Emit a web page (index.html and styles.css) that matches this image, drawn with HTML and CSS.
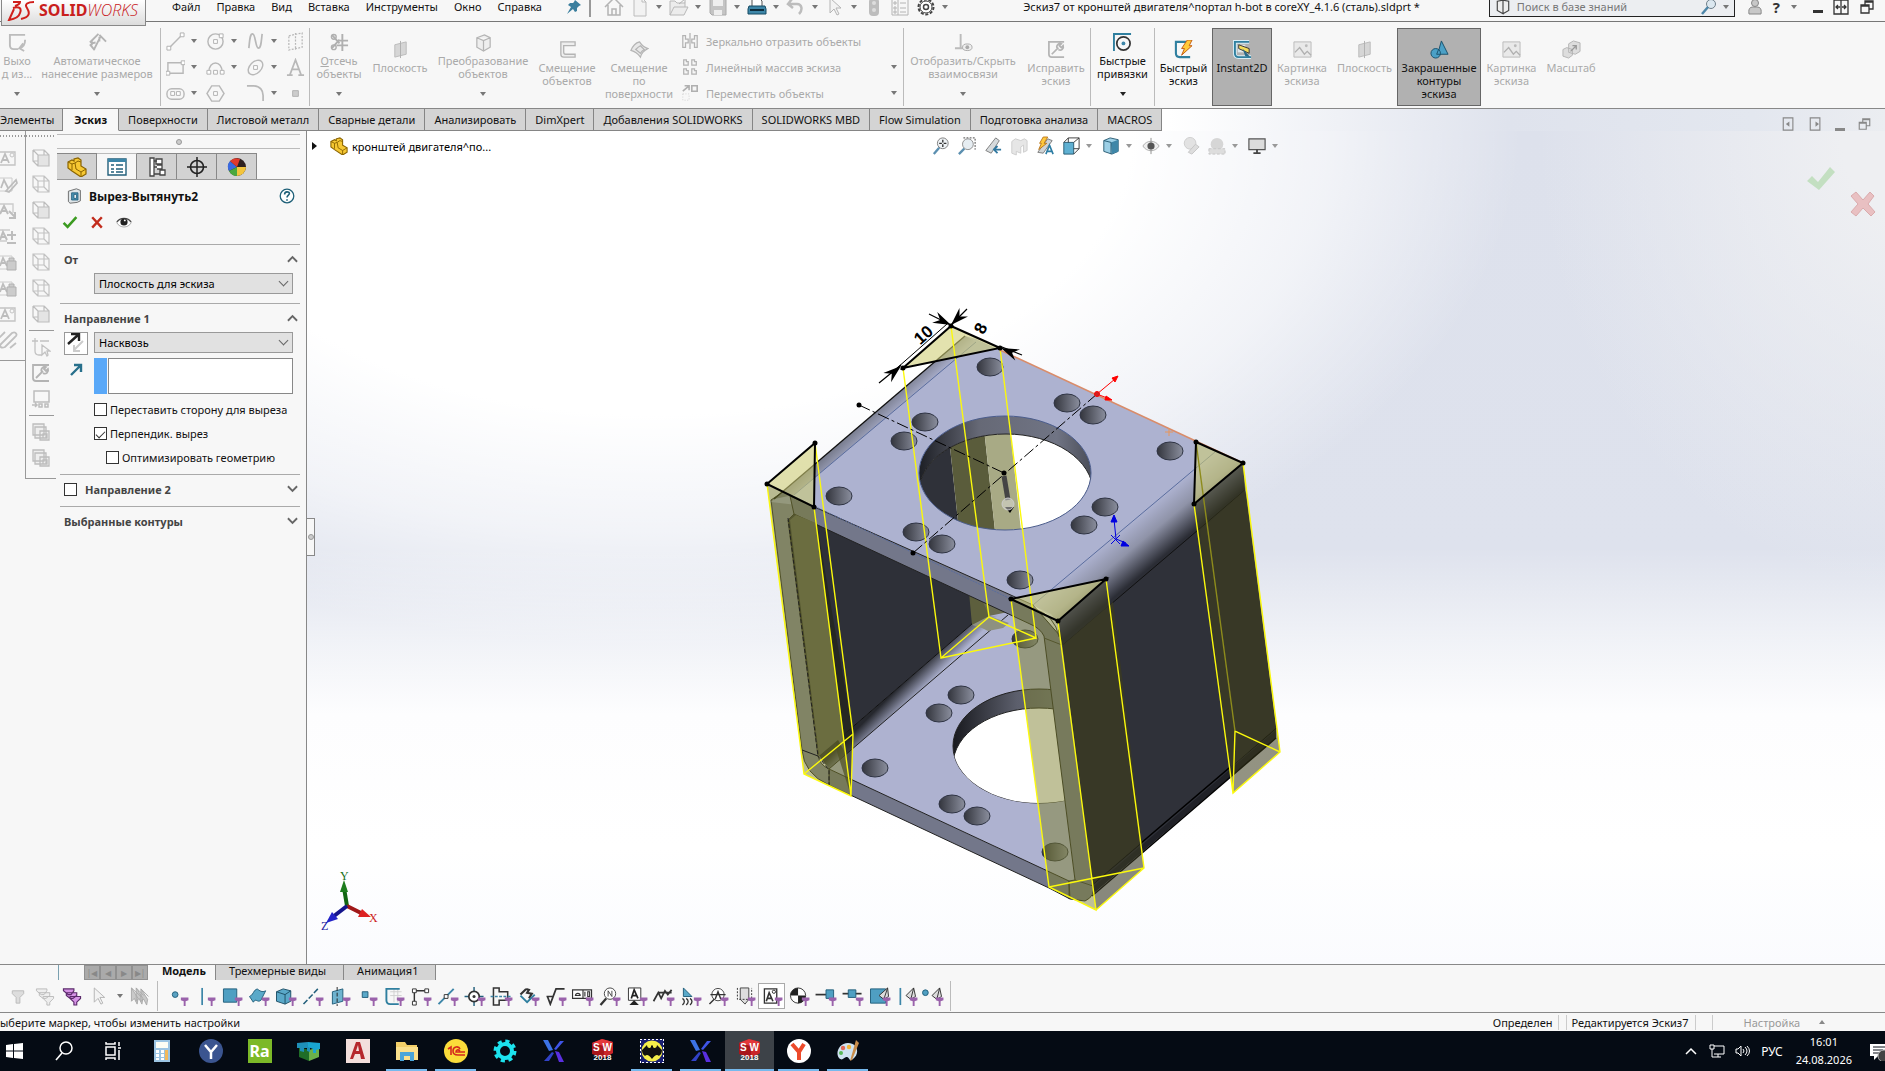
FILE: index.html
```html
<!DOCTYPE html>
<html lang="ru">
<head>
  <title>SOLIDWORKS</title>
  <meta charset="UTF-8">
  <link rel="stylesheet" href="styles.css">
</head>
<body>

<!-- Набор значков -->
<svg class="sprite" aria-hidden="true">
  <symbol id="pin" viewBox="0 0 14 14"><path d="M8 0l6 5-2 1-2 2 0 3-2 1-2-3-6 5 4-7-3-2 2-2 3 0 1-1z" fill="#3b7f9e"/></symbol>
  <symbol id="home" viewBox="0 0 20 20"><path d="M1 10L10 1l9 9M4 8v10h12V8M8 18v-6h4v6" fill="none" stroke="#b4b4b4" stroke-width="1.5"/></symbol>
  <symbol id="page" viewBox="0 0 20 20"><path d="M4 1h8l4 4v14H4zM12 1v4h4" fill="#f2f2f2" stroke="#bcbcbc"/></symbol>
  <symbol id="folder" viewBox="0 0 20 20"><path d="M1 18V4h5l2 2h8v4M1 18l4-8h14l-4 8z" fill="#ececec" stroke="#b8b8b8"/><path d="M10 7l6-5m-4 0h4v4" fill="none" stroke="#b0b0b0"/></symbol>
  <symbol id="save" viewBox="0 0 20 20"><path d="M2 2h16v16H4l-2-2z" fill="#c4c4c4" stroke="#aaa"/><path d="M5 2h10v7H5zM6 13h8v5H6z" fill="#eee"/></symbol>
  <symbol id="print" viewBox="0 0 20 20"><path d="M5 9V2h8l2 2v5" fill="#fff" stroke="#555"/><path d="M2 9h16l1 3v5H1v-5z" fill="#3d86a8" stroke="#174a63"/><path d="M3 13h14" stroke="#0d2d3d" stroke-width="2"/></symbol>
  <symbol id="undo" viewBox="0 0 20 20"><path d="M6 2L2 7l5 4M3 7h8c5 0 6 6 2 10" fill="none" stroke="#bdbdbd" stroke-width="2.5"/></symbol>
  <symbol id="cursor" viewBox="0 0 20 20"><path d="M5 1v15l4-4 3 6 2-1-3-6h5z" fill="#f3f3f3" stroke="#b4b4b4"/></symbol>
  <symbol id="light" viewBox="0 0 20 20"><rect x="5" y="1" width="10" height="18" rx="4" fill="#bdbdbd"/><circle cx="10" cy="6" r="2" fill="#ddd"/><circle cx="10" cy="13" r="2" fill="#ddd"/></symbol>
  <symbol id="list" viewBox="0 0 20 20"><path d="M2 2h16v16H2zM8 2v16M4 5h2v2H4zM4 10h2v2H4zM4 14h2v2H4zM10 6h6M10 11h6M10 15h6" fill="none" stroke="#b4b4b4"/></symbol>
  <symbol id="gear" viewBox="0 0 20 20"><circle cx="10" cy="10" r="7.5" fill="none" stroke="#444" stroke-width="2" stroke-dasharray="3 1.7"/><circle cx="10" cy="10" r="6" fill="#fff" stroke="#444"/><circle cx="10" cy="10" r="2.5" fill="none" stroke="#444" stroke-width="1.5"/></symbol>
  <symbol id="book" viewBox="0 0 14 14"><path d="M2 2l5-1v12l-5-3zM7 1l5 1v8l-5 3" fill="#eee" stroke="#444"/></symbol>
  <symbol id="loupe" viewBox="0 0 16 16"><circle cx="10" cy="5" r="4.5" fill="#dbe7ef" stroke="#6f7f8a"/><path d="M7 8l-6 7" stroke="#4e86a8" stroke-width="2.5"/></symbol>
  <symbol id="person" viewBox="0 0 16 16"><circle cx="8" cy="4" r="3.5" fill="#c8c8c8" stroke="#888"/><path d="M2 15c-1-7 2-7 6-7s7 0 6 7z" fill="#c8c8c8" stroke="#888"/></symbol>
  <symbol id="expand" viewBox="0 0 16 16"><path d="M1 1h14v14H1zM8 1v14M3 8h4M9 8h4M5 6L3 8l2 2M11 6l2 2-2 2" fill="none" stroke="#333" stroke-width="1.3"/></symbol>
  <symbol id="restore" viewBox="0 0 16 16"><path d="M2 6h8v8H2zM6 6V2h8v8h-4M2 7h8M6 3h8" fill="none" stroke="currentColor" stroke-width="1.3"/></symbol>
  <symbol id="pane-left" viewBox="0 0 16 16"><path d="M2 1h11v14H2z" fill="none" stroke="currentColor" stroke-width="1.3"/><path d="M9 5v6L5 8z" fill="currentColor"/></symbol>
  <symbol id="pane-right" viewBox="0 0 16 16"><path d="M2 1h11v14H2z" fill="none" stroke="currentColor" stroke-width="1.3"/><path d="M8 5v6l4-3z" fill="currentColor"/></symbol>

  <symbol id="exit" viewBox="0 0 20 20"><path d="M18 2H2v11c0 3 1 4 4 4h5M18 7c0 5-2 8-6 9m4-5l-4 5 5 3" fill="none" stroke="#bcbcbc" stroke-width="2"/></symbol>
  <symbol id="dims" viewBox="0 0 20 20"><path d="M2 10L11 1M7 18l-5-6M19 9l-7-7M3 11l5-1M4 8l0 5M13 4L6 18m6-14l0 5" fill="none" stroke="#b4b4b4" stroke-width="2"/></symbol>
  <symbol id="line" viewBox="0 0 20 20"><path d="M3 17L17 3" stroke="#b8b8b8" stroke-width="1.5"/><path d="M1 15h4v4H1zM15 1h4v4h-4z" fill="#fff" stroke="#b0b0b0"/></symbol>
  <symbol id="rect" viewBox="0 0 20 20"><path d="M2 5h16v11H2z" fill="none" stroke="#b8b8b8" stroke-width="1.5"/><path d="M0 14h4v4H0zM16 3h4v4h-4z" fill="#fff" stroke="#b0b0b0"/></symbol>
  <symbol id="slot" viewBox="0 0 20 20"><rect x="1" y="5" width="18" height="11" rx="5" fill="none" stroke="#b8b8b8" stroke-width="1.5"/><path d="M5 8h4v4H5zM11 8h4v4h-4z" fill="#fff" stroke="#b0b0b0"/></symbol>
  <symbol id="circle" viewBox="0 0 20 20"><circle cx="10" cy="10" r="8" fill="none" stroke="#b8b8b8" stroke-width="1.5"/><path d="M8 8h4v4H8zM14 2h4v4h-4z" fill="#fff" stroke="#b0b0b0"/></symbol>
  <symbol id="arc" viewBox="0 0 20 20"><path d="M3 15C3 2 17 2 17 15" fill="none" stroke="#b8b8b8" stroke-width="1.5"/><path d="M1 13h4v4H1zM15 13h4v4h-4zM8 13h4v4H8z" fill="#fff" stroke="#b0b0b0"/></symbol>
  <symbol id="hexagon" viewBox="0 0 20 20"><path d="M6 2h8l5 8-5 8H6l-5-8z" fill="none" stroke="#b8b8b8" stroke-width="1.5"/><path d="M8 8h4v4H8z" fill="#fff" stroke="#b0b0b0"/></symbol>
  <symbol id="spline" viewBox="0 0 20 20"><path d="M3 17C4 8 4 2 7 2s3 15 6 15 3-7 4-15" fill="none" stroke="#b8b8b8" stroke-width="1.8"/></symbol>
  <symbol id="ellipse" viewBox="0 0 20 20"><ellipse cx="10" cy="10" rx="9" ry="6" transform="rotate(-45 10 10)" fill="none" stroke="#b8b8b8" stroke-width="1.5"/><path d="M8 8h4v4H8z" fill="#fff" stroke="#b0b0b0"/></symbol>
  <symbol id="fillet" viewBox="0 0 20 20"><path d="M1 2h7c7 0 10 5 10 10v6" fill="none" stroke="#b8b8b8" stroke-width="1.8"/></symbol>
  <symbol id="plane-dash" viewBox="0 0 20 20"><path d="M3 4l14-3v15L3 19zM10 1v18" fill="none" stroke="#b8b8b8" stroke-width="1.3" stroke-dasharray="2 1.5"/></symbol>
  <symbol id="text" viewBox="0 0 20 20"><path d="M1 18h6M13 18h6M4 18L10 2l6 16M6 12h8" fill="none" stroke="#b8b8b8" stroke-width="1.8"/></symbol>
  <symbol id="point" viewBox="0 0 20 20"><path d="M7 7h6v6H7z" fill="#ccc" stroke="#b0b0b0"/></symbol>
  <symbol id="trim" viewBox="0 0 20 20"><path d="M13 1v18M7 13h12M9 8h10M2 2l8 9M2 16l8-9" fill="none" stroke="#b0b0b0" stroke-width="2"/><circle cx="4" cy="4" r="2.5" fill="none" stroke="#b0b0b0" stroke-width="1.5"/><circle cx="4" cy="15" r="2.5" fill="none" stroke="#b0b0b0" stroke-width="1.5"/></symbol>
  <symbol id="plane" viewBox="0 0 20 20"><path d="M4 5l12-3v13L4 18z" fill="#d6d6d6" stroke="#bbb"/><path d="M10 1v18" stroke="#b0b0b0"/></symbol>
  <symbol id="cube" viewBox="0 0 20 20"><path d="M3 5l8-3 6 3v10l-7 4-7-4zM3 5l7 3 7-3M10 8v11" fill="#eee" stroke="#b4b4b4" stroke-width="1.3"/></symbol>
  <symbol id="offset" viewBox="0 0 20 20"><path d="M18 2H3v13c0 2 1 3 3 3h12v-3H8c-2 0-2-1-2-2V6h12z" fill="#eee" stroke="#b4b4b4" stroke-width="1.4"/></symbol>
  <symbol id="surf" viewBox="0 0 20 20"><path d="M1 11c2-5 5-8 9-9 2 3 5 6 9 7-4 2-7 5-8 9-3-4-6-6-10-7zM6 10c2-2 3-3 5-4l4 4c-2 1-3 2-4 4z" fill="#e8e8e8" stroke="#b4b4b4" stroke-width="1.3"/></symbol>
  <symbol id="mirror" viewBox="0 0 20 20"><path d="M10 1v18M2 4h3v4h3v4H5v5H2zM18 4h-3v4h-3v4h3v5h3z" fill="none" stroke="#b4b4b4" stroke-width="1.4"/></symbol>
  <symbol id="pattern" viewBox="0 0 20 20"><path d="M3 2h3v2h2v4H3zM12 2h3v2h2v4h-5zM3 12h3v2h2v4H3zM12 12h3v2h2v4h-5z" fill="none" stroke="#b4b4b4" stroke-width="1.4"/></symbol>
  <symbol id="move" viewBox="0 0 20 20"><path d="M2 8l7-6M4 2h5v5M12 2h6v6h-6z" fill="none" stroke="#b0b0b0" stroke-width="1.8"/><path d="M2 11h7v7H2z" fill="none" stroke="#ccc" stroke-dasharray="1 2"/></symbol>
  <symbol id="relations" viewBox="0 0 20 20"><path d="M7 1v15M1 16h9" stroke="#bbb" stroke-width="2"/><ellipse cx="14" cy="15" rx="5" ry="3.5" fill="#eee" stroke="#aaa"/><circle cx="14" cy="15" r="2" fill="#aaa"/></symbol>
  <symbol id="repair" viewBox="0 0 20 20"><path d="M18 2H2v13c0 2 1 3 3 3h13M5 15l7-7M11 9c-2-3 1-6 4-5l-2 2 2 2 2-2c1 3-2 6-5 4" fill="none" stroke="#b4b4b4" stroke-width="1.8"/></symbol>
  <symbol id="snaps" viewBox="0 0 20 20"><path d="M1 19V1h18" fill="none" stroke="#2f7f9f" stroke-width="2"/><circle cx="11" cy="11" r="7" fill="none" stroke="#333" stroke-width="1.8"/><circle cx="11" cy="11" r="2" fill="#3d86a8"/></symbol>
  <symbol id="rapid" viewBox="0 0 20 20"><path d="M13 2H2v12c0 3 1 4 4 4h11" fill="none" stroke="#2f7f9f" stroke-width="2.2"/><path d="M14 0h5l-3 6h3L8 16l3-7H8z" fill="#ffca3a" stroke="#c25b12"/></symbol>
  <symbol id="instant" viewBox="0 0 20 20"><path d="M17 2H2v12c0 3 1 4 4 4h13" fill="none" stroke="#d8eef6" stroke-width="4"/><path d="M17 2H2v12c0 3 1 4 4 4h13" fill="none" stroke="#2f7f9f" stroke-width="2"/><path d="M5 5h8v8H5z" fill="#dfe8ec"/><path d="M6 5l11 4 0 5-11-5z" fill="#f4dc5a" stroke="#333"/><path d="M10 9l8 9-5-1" fill="#276b8a"/></symbol>
  <symbol id="picture" viewBox="0 0 20 20"><path d="M1 2h18v16H1z" fill="#e9e9e9" stroke="#bbb"/><path d="M2 13l5-5 5 7 3-3 4 4" fill="none" stroke="#b0b0b0" stroke-width="1.4"/><circle cx="14" cy="6" r="1.5" fill="#bbb"/></symbol>
  <symbol id="shaded" viewBox="0 0 20 20"><path d="M12 1l7 14H8z" fill="#4ba0c6" stroke="#19506c"/><circle cx="6" cy="14" r="5" fill="#4ba0c6" stroke="#19506c"/><path d="M9 10l-2 5h4" fill="none" stroke="#19506c"/></symbol>
  <symbol id="scale" viewBox="0 0 20 20"><path d="M7 4l5-3 7 2v9l-5 3-7-2zM1 10l4-2 6 2v6l-4 3-6-2z" fill="#ddd" stroke="#b4b4b4"/><path d="M9 12l6-6m-4 0h4v4" fill="none" stroke="#999" stroke-width="1.4"/></symbol>

  <symbol id="part" viewBox="0 0 20 20"><path d="M1 5l4-2 2 1 0-2 4-1 3 2v6l5 3v5l-5 3-9-6-4-3z" fill="#f6c833" stroke="#8a6400" stroke-width="1.2"/><path d="M1 5l4 2v6M5 7l3-1 1 6 5 3 5-3M8 6l3-2 3 1M14 15v5" fill="none" stroke="#8a6400"/></symbol>
  <symbol id="props" viewBox="0 0 20 20"><path d="M1 2h18v16H1z" fill="#fff" stroke="#225f7b" stroke-width="1.4"/><path d="M1 2h18v3H1z" fill="#3d86a8"/><path d="M4 8h3M4 12h3M4 15h3M9 8h7M9 12h7M9 15h7" stroke="#225f7b" stroke-width="1.6"/></symbol>
  <symbol id="config" viewBox="0 0 20 20"><path d="M3 1h4v18H3zM7 4h3M7 10h3M7 17h6M9 2h6v5H9zM10 8h5v4h-5M13 13h5v5h-5z" fill="#fff" stroke="#444" stroke-width="1.3"/></symbol>
  <symbol id="target" viewBox="0 0 20 20"><path d="M10 0v20M0 10h20" stroke="#222" stroke-width="1.5"/><circle cx="10" cy="10" r="6.5" fill="none" stroke="#222" stroke-width="1.6"/></symbol>
  <symbol id="ball" viewBox="0 0 20 20"><circle cx="10" cy="10" r="9" fill="#2e2020"/><path d="M10 10L3 4A9 9 0 0 0 2 14z" fill="#3a6ae0"/><path d="M10 10L13 2A9 9 0 0 0 3 4z" fill="#e03a2c"/><path d="M10 10L2 14a9 9 0 0 0 8 5z" fill="#4aa83d"/><path d="M10 10v9a9 9 0 0 0 9-9z" fill="#f3c43c"/></symbol>
  <symbol id="cut" viewBox="0 0 20 20"><path d="M3 4l10-3 5 2v13l-4 2-9 1-2-2z" fill="#dfe5e8" stroke="#555"/><path d="M7 6h8v9H7z" fill="#4b93b3" stroke="#1d5876"/><path d="M10 8h3v5h-3z" fill="#fff" stroke="#1d5876"/></symbol>
  <symbol id="help" viewBox="0 0 20 20"><circle cx="10" cy="10" r="8.5" fill="#fff" stroke="#1f6078" stroke-width="1.6"/><path d="M7 8c0-4 6-4 6-1 0 2-3 2-3 5M10 14v2" fill="none" stroke="#1f6078" stroke-width="2"/></symbol>
  <symbol id="tick" viewBox="0 0 20 20"><path d="M2 11l5 5L18 4" fill="none" stroke="#3c9b21" stroke-width="3.2"/></symbol>
  <symbol id="cross" viewBox="0 0 20 20"><path d="M4 4l12 13M16 4L4 17" stroke="#c22c1c" stroke-width="3"/></symbol>
  <symbol id="eye" viewBox="0 0 20 20"><path d="M1 11c4-7 14-7 18 0-4 7-14 7-18 0z" fill="#fff" stroke="#999"/><path d="M1 10c4-6 14-6 18 0" fill="none" stroke="#444" stroke-width="1.4"/><circle cx="10" cy="10" r="4.5" fill="#222"/><circle cx="11" cy="8" r="1.2" fill="#fff"/></symbol>
  <symbol id="chev-up" viewBox="0 0 12 8"><path d="M1 7l5-5 5 5" fill="none" stroke="#666" stroke-width="2"/></symbol>
  <symbol id="chev-down" viewBox="0 0 12 8"><path d="M1 1l5 5 5-5" fill="none" stroke="#666" stroke-width="2"/></symbol>
  <symbol id="reverse" viewBox="0 0 20 20"><path d="M2 11L12 2M5 1h8v7" fill="none" stroke="#222" stroke-width="2.4"/><path d="M17 8l-9 9m0-5v6h6" fill="none" stroke="#ccc" stroke-width="2"/></symbol>
  <symbol id="dir" viewBox="0 0 14 14"><path d="M2 12L11 3M5 2h7v7" fill="none" stroke="#28708c" stroke-width="2.4"/></symbol>

  <symbol id="anno" viewBox="0 0 20 20"><path d="M1 4h16v13H1" fill="none" stroke="#c4c4c4" stroke-width="1.4"/><path d="M3 15L7 6l4 9M5 12h5" fill="none" stroke="#bdbdbd" stroke-width="1.8"/><circle cx="14" cy="7" r="2" fill="none" stroke="#c4c4c4"/></symbol>
  <symbol id="anno-edit" viewBox="0 0 20 20"><path d="M1 4h13v13H1" fill="none" stroke="#ccc"/><path d="M3 14L6 6l4 8M8 17L18 6l1 3-8 9z" fill="none" stroke="#bdbdbd" stroke-width="1.8"/></symbol>
  <symbol id="anno-arrow" viewBox="0 0 20 20"><path d="M1 4h14v9" fill="none" stroke="#ccc" stroke-width="1.4"/><path d="M2 14L6 6l4 8M4 11h5M11 11l6 6m0-5v6h-6" fill="none" stroke="#bdbdbd" stroke-width="2"/></symbol>
  <symbol id="anno-plus" viewBox="0 0 20 20"><path d="M1 4h11M1 15h8" fill="none" stroke="#ccc" stroke-width="1.4"/><path d="M2 14L5 6l4 8M3 11h5M9 9h9M14 5v9M9 17h9" fill="none" stroke="#bdbdbd" stroke-width="2"/></symbol>
  <symbol id="anno-lock" viewBox="0 0 20 20"><path d="M1 4h13v13H1" fill="none" stroke="#ccc"/><path d="M2 14L5 6l4 8M3 11h5" fill="none" stroke="#bdbdbd" stroke-width="1.8"/><path d="M9 9h9v9H9zM11 9V6h5v3" fill="#ccc" stroke="#b0b0b0"/></symbol>
  <symbol id="links" viewBox="0 0 20 20"><path d="M3 14L14 3c4-2 6 2 3 4L7 17c-4 2-6-1-4-3zM1 8l6-6M12 18l6-5" fill="none" stroke="#c0c0c0" stroke-width="1.8"/></symbol>
  <symbol id="view" viewBox="0 0 20 20"><path d="M2 2h11v11H2zM7 7h11v11H7zM2 2l5 5M13 2l5 5M2 13l5 5M13 13l5 5" fill="none" stroke="#c2c2c2" stroke-width="1.2"/></symbol>
  <symbol id="view-face" viewBox="0 0 20 20"><path d="M7 7h11v11H7z" fill="#e4e4e4"/><path d="M2 2h11v5M2 2v11h5M7 7h11v11H7zM2 2l5 5M13 2l5 5M2 13l5 5" fill="none" stroke="#bdbdbd" stroke-width="1.2"/></symbol>
  <symbol id="sk-cursor" viewBox="0 0 20 20"><path d="M4 1v6M1 4h6M4 7v7c0 3 1 4 4 4h3M9 4h9M11 8v10l3-3 2 4 1-1-1-4h3z" fill="none" stroke="#c2c2c2" stroke-width="1.3"/></symbol>
  <symbol id="monitor" viewBox="0 0 20 20"><path d="M3 2h15v11H3zM1 16h5m-2-2l2 2-2 2M8 15h3v3H8zM14 15h3v3h-3z" fill="none" stroke="#bdbdbd" stroke-width="1.5"/></symbol>
  <symbol id="stack" viewBox="0 0 20 20"><path d="M2 2h11v11H2zM4 5h11v11H4zM9 9h9v9H9zM12 12h4v4h-4z" fill="#eee" stroke="#bdbdbd" stroke-width="1.3"/></symbol>

  <symbol id="zoom-fit" viewBox="0 0 20 20"><circle cx="12" cy="7" r="6" fill="#eef2f5" stroke="#777"/><path d="M12 3v8M8 7h8" stroke="#333" stroke-width="1.5" stroke-dasharray="3 2"/><path d="M8 12l-6 7" stroke="#5b8fb0" stroke-width="2.6"/></symbol>
  <symbol id="zoom-area" viewBox="0 0 20 20"><path d="M6 1h13v13" fill="none" stroke="#333" stroke-dasharray="2 1.5"/><circle cx="11" cy="8" r="6" fill="#e6edf2" stroke="#888"/><path d="M7 13l-6 6" stroke="#5b8fb0" stroke-width="2.6"/></symbol>
  <symbol id="zoom-prev" viewBox="0 0 20 20"><path d="M2 15L13 1l4 3L8 18z" fill="#d6dadc" stroke="#777"/><path d="M19 14h-8m4-4l-4 4 4 4" fill="none" stroke="#3178a0" stroke-width="2"/></symbol>
  <symbol id="section" viewBox="0 0 20 20"><path d="M2 5l4-3 6 2 4-2 3 2v11l-4 2v-8l-3 2v7l-5-2v4l-5-2z" fill="#e6e6e6" stroke="#ccc"/></symbol>
  <symbol id="anno-view" viewBox="0 0 20 20"><path d="M2 17L13 2l5 2L8 18z" fill="#d0d4d6" stroke="#777"/><path d="M8 0h5L9 7h3L3 14l3-7H4z" fill="#ffc93c" stroke="#b8741a"/><path d="M11 19l4-10 4 10M12 16h6" fill="none" stroke="#2c7da4" stroke-width="1.8"/></symbol>
  <symbol id="orient" viewBox="0 0 20 20"><path d="M2 6h11v13H2z" fill="#5fb0d2" stroke="#22566e"/><path d="M2 6l5-5h12v12l-6 6M13 6l6-5M7 1v5M13 13h6" fill="none" stroke="#333"/></symbol>
  <symbol id="style" viewBox="0 0 20 20"><path d="M2 4l7-3 9 2v13l-7 3-9-3z" fill="#9dd0e6" stroke="#22566e"/><path d="M10 6l8-3v13l-7 3z" fill="#3f87a8"/><path d="M2 4l8 2v13" fill="none" stroke="#22566e"/></symbol>
  <symbol id="eye-half" viewBox="0 0 20 20"><path d="M1 10c4-7 14-7 18 0-4 7-14 7-18 0z" fill="#eee" stroke="#aaa"/><path d="M10 1v18" stroke="#888"/><circle cx="10" cy="10" r="4" fill="#555"/></symbol>
  <symbol id="look" viewBox="0 0 20 20"><circle cx="9" cy="7" r="6.5" fill="#e2e2e2" stroke="#ccc"/><path d="M7 17l8-9 4 3-8 8z" fill="#ddd" stroke="#c4c4c4"/></symbol>
  <symbol id="scene" viewBox="0 0 20 20"><circle cx="10" cy="8" r="7" fill="#d6d6d6"/><path d="M1 13h18v6H1z" fill="#ddd" stroke="#c4c4c4" stroke-dasharray="3 2"/></symbol>
  <symbol id="screen" viewBox="0 0 20 20"><path d="M1 2h18v12H1z" fill="#dcdcdc" stroke="#555" stroke-width="1.3"/><path d="M10 14v4M6 18h8" stroke="#444" stroke-width="2"/></symbol>

  <symbol id="fn" viewBox="0 0 24 20"><path d="M15 11h8v3l-3 1v5h-2v-5l-3-1z" fill="#9a62ab"/></symbol>
  <symbol id="filter" viewBox="0 0 20 20"><path d="M4 4h12v3l-4 4v6H8v-6L4 7z" fill="#ddd" stroke="#bbb"/></symbol>
  <symbol id="filters" viewBox="0 0 20 20"><path d="M1 2h11v2l-3 4H6L1 4zM4 6h11v3l-4 3H8L4 9zM8 10h11v2l-4 4v3h-3v-3l-4-4z" fill="#eee" stroke="#bbb"/></symbol>
  <symbol id="filters-on" viewBox="0 0 20 20"><path d="M1 2h11v2l-3 4H6L1 4zM4 6h11v3l-4 3H8L4 9zM8 10h11v2l-4 4v3h-3v-3l-4-4z" fill="#d693e6" stroke="#5b2a6b" stroke-width="1.2"/></symbol>
  <symbol id="sel-stack" viewBox="0 0 20 20"><path d="M1 1v14l3-3 3 6 1-6zM6 1v14l3-3 3 6 1-6zM11 2v13l3-2 3 6 1-6z" fill="#c9c9c9" stroke="#aaa"/><path d="M1 1l10 9M6 1l8 8M11 2l8 8" stroke="#aaa"/></symbol>
  <symbol id="f-vertex" viewBox="0 0 24 20"><circle cx="9" cy="8" r="3" fill="#5aa2c2" stroke="#225f7b"/></symbol>
  <symbol id="f-edge" viewBox="0 0 24 20"><path d="M9 1v18" stroke="#3d86a8" stroke-width="1.8"/></symbol>
  <symbol id="f-face" viewBox="0 0 24 20"><path d="M3 2h14v14H3z" fill="#4f9fc2" stroke="#225f7b"/></symbol>
  <symbol id="f-surf" viewBox="0 0 24 20"><path d="M2 10c4-1 4-7 8-8 3 2 5 4 9 2l-5 10c-4 3-5-3-8 2z" fill="#5aa9c9" stroke="#225f7b"/></symbol>
  <symbol id="f-solid" viewBox="0 0 24 20"><path d="M2 5l7-3 8 2v11l-6 3-9-3z" fill="#5aa9c9" stroke="#1d4f66"/><path d="M2 5l9 3 6-4M11 8v10" fill="none" stroke="#1d4f66"/></symbol>
  <symbol id="f-axis" viewBox="0 0 24 20"><path d="M2 18L18 1" stroke="#225f7b" stroke-width="1.6" stroke-dasharray="6 2"/></symbol>
  <symbol id="f-plane" viewBox="0 0 24 20"><path d="M4 5l11-3v13L4 18z" fill="#6fb3cf" stroke="#225f7b"/><path d="M9 0v20" stroke="#222" stroke-dasharray="4 2"/></symbol>
  <symbol id="f-point" viewBox="0 0 24 20"><path d="M7 5h6v6H7z" fill="#5aa9c9" stroke="#225f7b"/></symbol>
  <symbol id="f-sketch" viewBox="0 0 24 20"><path d="M8 5h12M8 9h12M12 2v14M16 2v14" stroke="#d0d0d0"/><path d="M18 2H4v12c0 3 1 4 4 4h9" fill="none" stroke="#2f7f9f" stroke-width="2"/></symbol>
  <symbol id="f-seg" viewBox="0 0 24 20"><path d="M5 17V4h13" fill="none" stroke="#333" stroke-width="1.5"/><path d="M3 2h4v4H3zM16 2h4v4h-4zM3 15h4v4H3z" fill="#fff" stroke="#333"/></symbol>
  <symbol id="f-mid" viewBox="0 0 24 20"><path d="M2 18L18 2" stroke="#3d86a8" stroke-width="2"/><path d="M8 8h4v4H8z" fill="#fff" stroke="#333"/></symbol>
  <symbol id="f-center" viewBox="0 0 24 20"><path d="M11 0v20M1 10h20" stroke="#225f7b" stroke-width="1.5"/><circle cx="11" cy="10" r="5.5" fill="#fff" stroke="#333" stroke-width="1.8"/><circle cx="11" cy="10" r="1.6" fill="#333"/></symbol>
  <symbol id="f-cline" viewBox="0 0 24 20"><path d="M3 1h6v4h9v9H9v5H3z" fill="none" stroke="#333" stroke-width="1.6"/><path d="M0 10h22" stroke="#3d86a8" stroke-width="1.5" stroke-dasharray="3 1.5"/></symbol>
  <symbol id="f-dim" viewBox="0 0 24 20"><path d="M3 8l6-6M9 2l3 1-2 3 5 1-3 5" fill="none" stroke="#333" stroke-width="2.2"/><path d="M3 9l7 7 8-8" fill="none" stroke="#2f7f9f" stroke-width="2"/></symbol>
  <symbol id="f-rough" viewBox="0 0 24 20"><path d="M2 10h7M3 10l3 8L12 2h9" fill="none" stroke="#333" stroke-width="1.8"/></symbol>
  <symbol id="f-gtol" viewBox="0 0 24 20"><path d="M1 3h20v9H1zM12 3v9M4 9c0-3 5-3 5 0zM14 5v5M17 5h2v5h-2z" fill="#fff" stroke="#333" stroke-width="1.2"/></symbol>
  <symbol id="f-note" viewBox="0 0 24 20"><circle cx="12" cy="7" r="6" fill="#fff" stroke="#444"/><path d="M8 12l-6 7" stroke="#333" stroke-width="2.4"/><path d="M10 10V4l4 6V4" fill="none" stroke="#444"/></symbol>
  <symbol id="f-datum" viewBox="0 0 24 20"><path d="M3 1h13v13H3z" fill="#fff" stroke="#333"/><path d="M6 12l3-9 4 9M7 9h5" fill="none" stroke="#222" stroke-width="1.8"/><path d="M9 14l5 5H4z" fill="#222"/></symbol>
  <symbol id="f-weld" viewBox="0 0 24 20"><path d="M1 15l5-9 3 6 4-8 3 4 4-5M6 6h14" fill="none" stroke="#333" stroke-width="1.8"/></symbol>
  <symbol id="f-cat" viewBox="0 0 24 20"><path d="M4 1v9h9z" fill="#5aa9c9" stroke="#225f7b"/><path d="M3 12q4 3 0 7M7 12q4 3 0 7M11 12q4 3 0 7" fill="none" stroke="#333" stroke-width="1.4"/></symbol>
  <symbol id="f-detail" viewBox="0 0 24 20"><circle cx="12" cy="8" r="6.5" fill="#fff" stroke="#444"/><path d="M4 8h16M8 13l-5 5M9 13l3-8 3 8" fill="none" stroke="#333" stroke-width="1.5"/></symbol>
  <symbol id="f-thread" viewBox="0 0 24 20"><path d="M7 1h9v12l-4 5-5-5z" fill="#ddd" stroke="#444"/><path d="M4 1v12h15V1" fill="none" stroke="#333" stroke-dasharray="2 1.5"/></symbol>
  <symbol id="f-block" viewBox="0 0 24 20"><path d="M4 2h13v15H4z" fill="#fff" stroke="#333" stroke-width="1.4"/><path d="M6 15L9 6l4 9M7 12h5" fill="none" stroke="#333" stroke-width="1.7"/><circle cx="14" cy="5" r="1.7" fill="none" stroke="#333"/></symbol>
  <symbol id="f-mass" viewBox="0 0 24 20"><circle cx="11" cy="9" r="8" fill="#fff" stroke="#333"/><path d="M11 9V1a8 8 0 0 0-8 8zM11 9v8a8 8 0 0 0 8-8z" fill="#222"/></symbol>
  <symbol id="f-conn" viewBox="0 0 24 20"><path d="M1 8h12" stroke="#333" stroke-width="1.8"/><path d="M12 3h8v9h-8z" fill="#4f9fc2" stroke="#225f7b"/></symbol>
  <symbol id="f-route" viewBox="0 0 24 20"><path d="M1 7h20" stroke="#333" stroke-width="1.8"/><path d="M7 3h8v8H7z" fill="#4f9fc2" stroke="#225f7b"/></symbol>
  <symbol id="f-mface" viewBox="0 0 24 20"><path d="M2 2h16v15H2z" fill="#4f9fc2" stroke="#225f7b"/><path d="M20 1L11 9l5 4 5-3zM20 1l-4 12" fill="#ddd" stroke="#333"/></symbol>
  <symbol id="f-medge" viewBox="0 0 24 20"><path d="M5 1v18" stroke="#3d86a8" stroke-width="1.8"/><path d="M19 1l-8 8 5 4 5-3zM19 1l-3 12" fill="#ddd" stroke="#333"/></symbol>
  <symbol id="f-mpoint" viewBox="0 0 24 20"><circle cx="4" cy="6" r="3" fill="#4f9fc2" stroke="#225f7b"/><path d="M19 1l-8 8 5 4 5-3zM19 1l-3 12" fill="#ddd" stroke="#333"/></symbol>

  <symbol id="win" viewBox="0 0 24 24"><path d="M4 6l7-1v6.500H4zM12 5l9-1v7.500h-9zM4 12.500h7V19l-7-1zM12 12.500h9V20l-9-1z" fill="#fff"/></symbol>
  <symbol id="search" viewBox="0 0 24 24"><circle cx="14" cy="9" r="6" fill="none" stroke="#fff" stroke-width="1.500"/><path d="M10 14l-6 7" stroke="#fff" stroke-width="1.600"/></symbol>
  <symbol id="tasks" viewBox="0 0 24 24"><path d="M5 8h9v8H5zM5 3v2h9V3M5 21v-2h9v2M18 3v4M18 11v10M17 9h3" fill="none" stroke="#fff" stroke-width="1.500"/></symbol>
  <symbol id="calc" viewBox="0 0 24 24"><rect x="4" y="1" width="16" height="22" fill="#9cc4e2"/><path d="M6 3h12v6H6z" fill="#fdfdf4"/><path d="M6 11h3v3H6zM11 11h3v3h-3zM6 15h3v3H6zM11 15h3v3h-3zM6 19h3v2H6zM11 19h3v2h-3z" fill="#fff"/><path d="M15 11h3v10h-3z" fill="#f2b95c"/></symbol>
  <symbol id="y-blue" viewBox="0 0 24 24"><circle cx="12" cy="12" r="12" fill="#3b5590"/><path d="M6 6l6 7 6-7M12 13v7" fill="none" stroke="#fff" stroke-width="2.500"/></symbol>
  <symbol id="blocks" viewBox="0 0 24 24"><path d="M2 8l10 3v11L2 18z" fill="#1f6d28"/><path d="M12 11l10-3v10l-10 4z" fill="#6ab04a"/><path d="M0 4l11-1v4l2 1v5l-3-1v-3l-3 0v4l-4-1V9L0 9z" fill="#1e8fb8"/><path d="M11 3l12 1v6l-4 1v3l-3 0v-4l-5-2z" fill="#19a5d0"/></symbol>
  <symbol id="acad" viewBox="0 0 24 24"><path d="M0 0h24v24H0z" fill="#f3dfdc"/><path d="M4 20L10 3h4l5 17h-4l-1-5H9l-2 5z" fill="#b5262b"/><path d="M10 12l2-6 1 6z" fill="#f3dfdc"/></symbol>
  <symbol id="explorer" viewBox="0 0 24 24"><path d="M1 3h9l2 3h10v14H1z" fill="#f3cf68"/><path d="M1 8h22v13H1z" fill="#fbe08b"/><path d="M5 22v-9h14v9h-4v-5H9v5z" fill="#4aa5d8"/></symbol>
  <symbol id="onec" viewBox="0 0 24 24"><circle cx="12" cy="12" r="12" fill="#fbdc3a"/><path d="M4 10l3-2v8M16 10c-1-3-7-3-7 2 0 3 2 4 5 4h7M16 12c-2-2-4-1-4 1h9" fill="none" stroke="#d4281e" stroke-width="1.600"/></symbol>
  <symbol id="cog" viewBox="0 0 24 24"><circle cx="12" cy="12" r="9.500" fill="none" stroke="#1ce3ee" stroke-width="4" stroke-dasharray="4 3.460"/><circle cx="12" cy="12" r="7" fill="none" stroke="#1ce3ee" stroke-width="4"/></symbol>
  <symbol id="xlogo" viewBox="0 0 24 24"><path d="M1 1h5l5 10-4 1z" fill="#3c73e6"/><path d="M18 2h4l-8 9-2-1z" fill="#3f55e8"/><path d="M2 22l8-9 2 1-5 8z" fill="#3142c8"/><path d="M13 12l4 1 5 10h-5z" fill="#5a2fe0"/></symbol>
  <symbol id="swcube" viewBox="0 0 24 24"><path d="M1 4l10-4 11 3v11l-9 5-12-4z" fill="#a8161b"/><path d="M1 4l10-4 11 3-9 4z" fill="#e3383b"/><path d="M13 7l9-4v11l-9 5z" fill="#c9252a"/></symbol>
  <symbol id="bat" viewBox="0 0 24 24"><path d="M0 0h24v24H0z" fill="#1a2070" stroke="#fff" stroke-width="2" stroke-dasharray="2 2"/><circle cx="12" cy="12" r="10.500" fill="#f6ee4a"/><path d="M2 11l5-5c0 3 3 4 4 2l0-2 1 1 1-1v2c1 2 4 1 4-2l5 5c0 4-2 5-3 6-2-2-4-1-7 3-3-4-5-5-7-3-1-1-3-2-3-6z" fill="#111"/></symbol>
  <symbol id="y-red" viewBox="0 0 24 24"><circle cx="12" cy="12" r="12" fill="#fff"/><path d="M5 5l7 8v8M12 13l5-8" fill="none" stroke="#ec4a2b" stroke-width="4"/></symbol>
  <symbol id="paint" viewBox="0 0 24 24"><path d="M12 4C3 4-1 14 3 19c4 4 5-2 8-1s2 5 6 2c7-5 5-16-5-16z" fill="#cfe3f1"/><circle cx="7" cy="9" r="2.200" fill="#e06a5a"/><circle cx="5" cy="14" r="2" fill="#58b858"/><circle cx="13" cy="8" r="2.200" fill="#f0b63a"/><path d="M20 1l3 3-7 17-2 1z" fill="#c98d4a"/></symbol>
</svg>

<header class="titlebar">
  <div class="logo">
    <svg class="ds" viewBox="0 0 28 20"><path d="M6 1h7c0 2-2 3-5 4M6 7c6-2 9 0 7 5-1 4-5 6-11 7l5-11M27 1c-6 0-10 2-7 6 3 5 3 9-6 11" fill="none" stroke="#d0201c" stroke-width="2"/></svg>
    <span><b>SOLID</b><i>WORKS</i></span>
  </div>
  <nav class="menu">
    <a href="#">Файл</a>
    <a href="#">Правка</a>
    <a href="#">Вид</a>
    <a href="#">Вставка</a>
    <a href="#">Инструменты</a>
    <a href="#">Окно</a>
    <a href="#">Справка</a>
  </nav>
  <svg class="pin"><use href="#pin"/></svg>
  <div class="quick">
    <button class="no-arrow" aria-label="Домой"><svg><use href="#home"/></svg></button>
    <button aria-label="Создать"><svg><use href="#page"/></svg></button>
    <button aria-label="Открыть"><svg><use href="#folder"/></svg></button>
    <button aria-label="Сохранить"><svg><use href="#save"/></svg></button>
    <button class="on" aria-label="Печать"><svg><use href="#print"/></svg></button>
    <button aria-label="Отменить"><svg><use href="#undo"/></svg></button>
    <button aria-label="Выбрать"><svg><use href="#cursor"/></svg></button>
    <button class="no-arrow" aria-label="Перестроить"><svg><use href="#light"/></svg></button>
    <button class="no-arrow" aria-label="Свойства файла"><svg><use href="#list"/></svg></button>
    <button class="on" aria-label="Параметры"><svg><use href="#gear"/></svg></button>
  </div>
  <div class="doc-title">Эскиз7 от кронштей двигателя^портал h-bot в coreXY_4.1.6 (сталь).sldprt *</div>
  <div class="search">
    <svg><use href="#book"/></svg>
    <input type="text" placeholder="Поиск в базе знаний" aria-label="Поиск">
    <svg><use href="#loupe"/></svg>
    <span class="arrow"></span>
  </div>
  <div class="window-buttons">
    <button aria-label="Вход"><svg><use href="#person"/></svg></button>
    <button class="question" aria-label="Справка">?<span class="arrow"></span></button>
    <button aria-label="Свернуть"><span class="min"></span></button>
    <button aria-label="Развернуть"><svg><use href="#expand"/></svg></button>
    <button aria-label="Восстановить"><svg><use href="#restore"/></svg></button>
  </div>
</header>

<section class="ribbon">
  <button class="tool"><svg><use href="#exit"/></svg><span>Выхо<br>д из...</span><span class="arrow"></span></button>
  <button class="tool sep"><svg><use href="#dims"/></svg><span>Автоматическое<br>нанесение размеров</span><span class="arrow"></span></button>
  <div class="sketch-grid sep">
    <button aria-label="Линия"><svg><use href="#line"/></svg><span class="arrow"></span></button>
    <button aria-label="Окружность"><svg><use href="#circle"/></svg><span class="arrow"></span></button>
    <button aria-label="Сплайн"><svg><use href="#spline"/></svg><span class="arrow"></span></button>
    <button aria-label="Плоскость"><svg><use href="#plane-dash"/></svg></button>
    <button aria-label="Прямоугольник"><svg><use href="#rect"/></svg><span class="arrow"></span></button>
    <button aria-label="Дуга"><svg><use href="#arc"/></svg><span class="arrow"></span></button>
    <button aria-label="Эллипс"><svg><use href="#ellipse"/></svg><span class="arrow"></span></button>
    <button aria-label="Текст"><svg><use href="#text"/></svg></button>
    <button aria-label="Прорезь"><svg><use href="#slot"/></svg><span class="arrow"></span></button>
    <button aria-label="Многоугольник"><svg><use href="#hexagon"/></svg></button>
    <button aria-label="Скругление"><svg><use href="#fillet"/></svg><span class="arrow"></span></button>
    <button aria-label="Точка"><svg><use href="#point"/></svg></button>
  </div>
  <button class="tool"><svg><use href="#trim"/></svg><span><u>О</u>тсечь<br>объекты</span><span class="arrow"></span></button>
  <button class="tool low"><svg><use href="#plane"/></svg><span>Плоскость</span></button>
  <button class="tool"><svg><use href="#cube"/></svg><span>Преобразование<br>объектов</span><span class="arrow"></span></button>
  <button class="tool low"><svg><use href="#offset"/></svg><span>Смещение<br>объектов</span></button>
  <button class="tool low"><svg><use href="#surf"/></svg><span>Смещение<br>по<br>поверхности</span></button>
  <div class="tool-list sep">
    <button><svg><use href="#mirror"/></svg>Зеркально отразить объекты</button>
    <button><svg><use href="#pattern"/></svg>Линейный массив эскиза<span class="arrow"></span></button>
    <button><svg><use href="#move"/></svg>Переместить объекты<span class="arrow"></span></button>
  </div>
  <button class="tool"><svg><use href="#relations"/></svg><span>Отобразить/Скрыть<br>взаимосвязи</span><span class="arrow"></span></button>
  <button class="tool low sep"><svg><use href="#repair"/></svg><span>Исправить<br>эскиз</span></button>
  <button class="tool on sep"><svg><use href="#snaps"/></svg><span>Быстрые<br>привязки</span><span class="arrow"></span></button>
  <button class="tool low on"><svg><use href="#rapid"/></svg><span>Быстрый<br>эскиз</span></button>
  <button class="tool low on pressed"><svg><use href="#instant"/></svg><span>Instant2D</span></button>
  <button class="tool low"><svg><use href="#picture"/></svg><span>Картинка<br>эскиза</span></button>
  <button class="tool low"><svg><use href="#plane"/></svg><span>Плоскость</span></button>
  <button class="tool low on pressed"><svg><use href="#shaded"/></svg><span>Закрашенные<br>контуры<br>эскиза</span></button>
  <button class="tool low"><svg><use href="#picture"/></svg><span>Картинка<br>эскиза</span></button>
  <button class="tool low"><svg><use href="#scale"/></svg><span>Масштаб</span></button>
</section>

<nav class="tabs">
  <a href="#">Элементы</a>
  <a href="#" class="active">Эскиз</a>
  <a href="#">Поверхности</a>
  <a href="#">Листовой металл</a>
  <a href="#">Сварные детали</a>
  <a href="#">Анализировать</a>
  <a href="#">DimXpert</a>
  <a href="#">Добавления SOLIDWORKS</a>
  <a href="#">SOLIDWORKS MBD</a>
  <a href="#">Flow Simulation</a>
  <a href="#">Подготовка анализа</a>
  <a href="#">MACROS</a>
  <div class="doc-buttons">
    <button aria-label="Влево"><svg><use href="#pane-left"/></svg></button>
    <button aria-label="Вправо"><svg><use href="#pane-right"/></svg></button>
    <button aria-label="Свернуть документ"><span class="min"></span></button>
    <button aria-label="Восстановить документ"><svg><use href="#restore"/></svg></button>
  </div>
</nav>

<main>
  <div class="side-bars">
    <div class="bar bar-first">
      <svg><use href="#anno"/></svg>
      <svg><use href="#anno-edit"/></svg>
      <svg><use href="#anno-arrow"/></svg>
      <svg><use href="#anno-plus"/></svg>
      <svg><use href="#anno-lock"/></svg>
      <svg><use href="#anno-lock"/></svg>
      <svg><use href="#anno"/></svg>
      <svg><use href="#links"/></svg>
    </div>
    <div class="bar bar-second">
      <svg><use href="#view-face"/></svg>
      <svg><use href="#view"/></svg>
      <svg><use href="#view-face"/></svg>
      <svg><use href="#view"/></svg>
      <svg><use href="#view"/></svg>
      <svg><use href="#view"/></svg>
      <svg><use href="#view-face"/></svg>
      <hr>
      <svg><use href="#sk-cursor"/></svg>
      <svg><use href="#repair"/></svg>
      <svg><use href="#monitor"/></svg>
      <hr>
      <svg><use href="#stack"/></svg>
      <svg><use href="#stack"/></svg>
    </div>
  </div>

  <aside class="panel">
    <div class="grip"><span></span></div>
    <div class="panel-tabs">
      <button aria-label="Дерево"><svg><use href="#part"/></svg></button>
      <button class="active" aria-label="Свойства"><svg><use href="#props"/></svg></button>
      <button aria-label="Конфигурации"><svg><use href="#config"/></svg></button>
      <button aria-label="DimXpertManager"><svg><use href="#target"/></svg></button>
      <button aria-label="DisplayManager"><svg><use href="#ball"/></svg></button>
    </div>
    <div class="panel-title">
      <svg><use href="#cut"/></svg>
      <h1>Вырез-Вытянуть2</h1>
      <button aria-label="Справка"><svg><use href="#help"/></svg></button>
    </div>
    <div class="panel-actions">
      <button aria-label="ОК"><svg><use href="#tick"/></svg></button>
      <button aria-label="Отмена"><svg><use href="#cross"/></svg></button>
      <button aria-label="Просмотр"><svg><use href="#eye"/></svg></button>
    </div>

    <section class="group from">
      <h2>От <svg><use href="#chev-up"/></svg></h2>
      <div class="select"><select aria-label="От"><option>Плоскость для эскиза</option></select></div>
    </section>

    <section class="group direction">
      <h2>Направление 1 <svg><use href="#chev-up"/></svg></h2>
      <div class="field">
        <button class="reverse" aria-label="Реверс"><svg><use href="#reverse"/></svg></button>
        <div class="select"><select aria-label="Граничное условие"><option>Насквозь</option></select></div>
      </div>
      <div class="field">
        <svg class="dir"><use href="#dir"/></svg>
        <div class="listbox"><input type="text" aria-label="Направление вытяжки"></div>
      </div>
      <label class="check"><input type="checkbox">Переставить сторону для выреза</label>
      <label class="check"><input type="checkbox" checked>Перпендик. вырез</label>
      <label class="check inner"><input type="checkbox">Оптимизировать геометрию</label>
    </section>

    <section class="group">
      <h2><label class="check"><input type="checkbox">Направление 2</label> <svg><use href="#chev-down"/></svg></h2>
    </section>
    <section class="group">
      <h2>Выбранные контуры <svg><use href="#chev-down"/></svg></h2>
    </section>
  </aside>

  <div class="viewport">
    <div class="handle"><span></span></div>
    <div class="tree-node"><span class="expand-arrow"></span><svg><use href="#part"/></svg>кронштей двигателя^по...</div>
    <div class="view-tools">
      <button aria-label="Во весь экран"><svg><use href="#zoom-fit"/></svg></button>
      <button aria-label="Увеличить область"><svg><use href="#zoom-area"/></svg></button>
      <button aria-label="Предыдущий вид"><svg><use href="#zoom-prev"/></svg></button>
      <button aria-label="Разрез"><svg><use href="#section"/></svg></button>
      <button aria-label="Примечания"><svg><use href="#anno-view"/></svg></button>
      <button aria-label="Ориентация"><svg><use href="#orient"/></svg><span class="arrow"></span></button>
      <button aria-label="Отображение"><svg><use href="#style"/></svg><span class="arrow"></span></button>
      <button aria-label="Скрыть"><svg><use href="#eye-half"/></svg><span class="arrow"></span></button>
      <button aria-label="Внешний вид"><svg><use href="#look"/></svg></button>
      <button aria-label="Сцена"><svg><use href="#scene"/></svg><span class="arrow"></span></button>
      <button aria-label="Настройки вида"><svg><use href="#screen"/></svg><span class="arrow"></span></button>
    </div>
    <svg class="confirm" viewBox="0 0 70 56"><path d="M0 15l5-5 6 6L23 1l5 5-16 18z" fill="#c3dfc1"/><path d="M44 30l5-4 7 8 7-8 4 4-6 8 7 8-4 4-8-8-7 8-5-4 7-8z" fill="#e9c0c2" stroke="#d9abad"/></svg>

    <!-- Модель кронштейна -->
    <svg class="model" viewBox="0 0 560 640">
      <defs>
        <linearGradient id="gHole"><stop offset="0" stop-color="#33353d"/><stop offset="1" stop-color="#8b8f9e"/></linearGradient>
        <linearGradient id="gBore"><stop offset="0" stop-color="#1d1f25"/><stop offset=".35" stop-color="#666976"/><stop offset=".8" stop-color="#707484"/><stop offset="1" stop-color="#4b4e59"/></linearGradient>
        <linearGradient id="gBore2" gradientUnits="userSpaceOnUse" x1="212" y1="0" x2="320" y2="0"><stop offset="0" stop-color="#17181d"/><stop offset=".6" stop-color="#5c5f6c"/><stop offset="1" stop-color="#6d7180"/></linearGradient>
        <linearGradient id="gBend" gradientUnits="userSpaceOnUse" x1="384" y1="238" x2="414" y2="274"><stop offset="0" stop-color="#adb2d0"/><stop offset=".45" stop-color="#8f93a8"/><stop offset="1" stop-color="#2b2d35"/></linearGradient>
        <linearGradient id="gBend2" gradientUnits="userSpaceOnUse" x1="156" y1="400" x2="170" y2="414"><stop offset="0" stop-color="#26282e"/><stop offset="1" stop-color="#adb2d0"/></linearGradient>
        <linearGradient id="gBend3" gradientUnits="userSpaceOnUse" x1="120" y1="134" x2="133" y2="148"><stop offset="0" stop-color="#777b8c"/><stop offset="1" stop-color="#adb2d0"/></linearGradient>
        <clipPath id="cBore"><ellipse cx="265" cy="183" rx="86" ry="57"/></clipPath>
        <clipPath id="cBore2"><ellipse cx="299" cy="456" rx="86" ry="57"/></clipPath>
        <clipPath id="cIn"><ellipse cx="266" cy="202" rx="87" ry="58"/></clipPath>
        <clipPath id="cLow"><path d="M89 479L232 334 268 325 304 340 335 590 329 591z"/></clipPath>
        <ellipse id="h" rx="13" ry="9" fill="url(#gHole)" stroke="#2e3342"/>
        <path id="ah" d="M0 0L-12-4-8 0-12 4z"/>
      </defs>

      <!-- нижняя пластина -->
      <path d="M226 298L300 330 306 350 250 345 230 335z" fill="#6b6d52"/>
      <path d="M79 466L232 332 249 326 268 322 304 340 335 590 329 591 89 479z" fill="#aeb2d0"/>
      <path d="M79 466L240 327 268 325 89 479z" fill="url(#gBend2)"/>
      <path d="M268 325L89 479" stroke="#222"/>
      <g clip-path="url(#cLow)">
        <ellipse cx="299" cy="456" rx="86" ry="57" fill="url(#gBore2)" stroke="#222"/>
        <ellipse cx="299" cy="475" rx="86" ry="57" fill="#fff" stroke="#222" clip-path="url(#cBore2)"/>
      </g>
      <use href="#h" x="221" y="405"/><use href="#h" x="199" y="423"/><use href="#h" x="135" y="478"/>
      <use href="#h" x="212" y="514"/><use href="#h" x="237" y="526"/><use href="#h" x="315" y="562"/><use href="#h" x="285" y="349"/>
      <path d="M89 479L329 591 330 609 309 598 89 495z" fill="#73778a" stroke="#222"/>

      <!-- левая стенка и рамка -->
      <path d="M48 226L54 220 241 308 232 334 79 466z" fill="#2e3038" stroke="#111"/>
      <path d="M229 302l12 6 9 19-18 8z" fill="#5d5f3d"/>
      <path d="M232 335l17-9 20 7-6 5-15 3-6-3z" fill="#8e9180"/>
      <path d="M31 210L40 204 74 217 54 224 48 230 78 466Q80 475 89 479v16Q64 484 62 460z" fill="#878aa0" stroke="#222"/>
      <path d="M74 217L113 444 111 506 97 462 71 230z" fill="#22231b" opacity=".7"/>

      <!-- правая стенка -->
      <path d="M318 340L500 180 506 205 536 438v10L352 600 345 611z" fill="#2f3139"/>
      <path d="M536 440v8L353 604v-7z" fill="#202127"/>
      <path d="M536 438L353 594M536 448L352 606" stroke="#000" stroke-width="1.5"/>

      <!-- верхняя пластина -->
      <path d="M31 212L225 46 236 49 503 173 475 166 318 331 293 315 74 217z" fill="#adb2d0"/>
      <path d="M34 209L225 46l11 6L54 205z" fill="url(#gBend3)"/>
      <path d="M34 209L225 46" stroke="#111" stroke-width="1.3"/>
      <path d="M293 315L475 162l28 11 2 27-182 155q-2-20-12-31z" fill="url(#gBend)"/>
      <path d="M505 200L323 355" stroke="#111"/>
      <path d="M236 52L54 205M475 162L293 315" stroke="#5a6d9e" fill="none"/>
      <path d="M50 206L293 315 321 347 323 355 353 594Q356 606 345 611l-15-2-1-18 6-1-31-244Q300 338 290 334L54 224z" fill="#73778a" stroke="#222"/>
      <path d="M40 200L271 309" stroke="#5a6d9e" stroke-dasharray="2 1"/>
      <path d="M293 318Q315 325 319 347M304 348l18 7M335 590l18 6M329 591v18" fill="none" stroke="#333"/>

      <!-- центральное отверстие -->
      <g clip-path="url(#cBore)">
        <ellipse cx="265" cy="183" rx="86" ry="57" fill="url(#gBore)"/>
        <g clip-path="url(#cIn)">
          <path d="M170 120h200v130H170z" fill="#fff"/>
          <path d="M170 120h36l14 130h-50z" fill="#2f3139"/>
          <path d="M206 120h36l14 130h-36z" fill="#5a5c3b"/>
          <path d="M242 120h26l14 130h-26z" fill="#a8aa85"/>
        </g>
        <ellipse cx="266" cy="202" rx="87" ry="58" fill="none" stroke="#222"/>
      </g>
      <ellipse cx="265" cy="183" rx="86" ry="57" fill="none" stroke="#4a5c8c"/>

      <use href="#h" x="250" y="77"/><use href="#h" x="327" y="113"/><use href="#h" x="353" y="125"/><use href="#h" x="430" y="161"/>
      <use href="#h" x="185" y="132"/><use href="#h" x="164" y="151"/><use href="#h" x="99" y="206"/><use href="#h" x="176" y="242"/>
      <use href="#h" x="202" y="254"/><use href="#h" x="280" y="290"/><use href="#h" x="344" y="235"/><use href="#h" x="365" y="217"/>

      <!-- объёмы выреза -->
      <path d="M27 194L74 217 111 506 64 484z" fill="#7c7d2a" fill-opacity=".5"/>
      <path d="M50 230L56 225 76 233 106 464 98 450 79 466z" fill="#6b6d40"/>
      <path d="M48 228L78 466 89 480v15" fill="none" stroke="#222" stroke-dasharray="4 2"/>
      <path d="M62 460l16 6" stroke="#222"/>
      <path d="M271 309L318 331 356 620 309 597z" fill="#7c7d2a" fill-opacity=".48"/>
      <path d="M318 331L366 289 404 578 356 620z" fill="#3a3a24" fill-opacity=".6"/>
      <path d="M323 355L373 312 402 552 353 594z" fill="#383826"/>
      <path d="M454 214L503 173 540 462 493 503z" fill="#3a3a1c" fill-opacity=".55"/>
      <path d="M460 240L505 200 536 438 490 478z" fill="#383826"/>
      <g fill="#cfcd74" fill-opacity=".58">
        <path d="M211 36L260 58 163 78z"/><path d="M27 194L75 153 74 217z"/>
        <path d="M456 152L503 173 454 214z"/><path d="M271 309L366 289 318 331z"/>
      </g>
      <g fill="none" stroke="#fbf90c" stroke-width="1.4">
        <path d="M27 194L64 484 111 506 74 217M75 153L113 444 64 484M113 444L111 506"/>
        <path d="M163 78L201 368 249 327 211 36M249 327L296 348 260 58M201 368L296 348"/>
        <path d="M271 309L309 597 356 620 318 331M356 620L404 578 366 289M309 597L404 578"/>
        <path d="M454 214L493 503 540 462 503 173M493 503L495 441 540 462"/>
        <path d="M456 152L495 441" stroke="#8d8b1c"/>
      </g>
      <path d="M260 60L503 173" stroke="#d98c6a" stroke-width="1.6"/>
      <path d="M425 142h8M429 138v8" stroke="#e8965a"/>

      <!-- эскиз -->
      <g fill="none" stroke="#000" stroke-width="2">
        <path d="M211 36L260 58 163 78z"/><path d="M27 194L75 153 74 217z"/>
        <path d="M456 152L503 173 454 214z"/><path d="M271 309L366 289 318 331z"/>
        <path d="M119 115L264 183M357 104L173 263" stroke-width="1" stroke-dasharray="12 3 3 3"/>
        <path d="M157 78L207 34" stroke-width="1"/>
        <path d="M189 24l22 11M227 19l-16 16M139 93l22-18M282 65l-20-8" stroke-width="1.2"/>
      </g>
      <path d="M264 186l4 24" stroke="#444" stroke-width="5"/><path d="M265 217h9l-4 6z"/>
      <circle cx="268" cy="214" r="6" fill="#ddd" fill-opacity=".5" stroke="#ccc"/>
      <g>
        <circle cx="211" cy="36" r="2.500"/><circle cx="260" cy="58" r="2.500"/><circle cx="163" cy="78" r="2.500"/>
        <circle cx="27" cy="194" r="2.500"/><circle cx="75" cy="153" r="2.500"/><circle cx="74" cy="217" r="2.500"/>
        <circle cx="456" cy="152" r="2.500"/><circle cx="503" cy="173" r="2.500"/><circle cx="454" cy="214" r="2.500"/>
        <circle cx="271" cy="309" r="2.500"/><circle cx="366" cy="289" r="2.500"/><circle cx="318" cy="331" r="2.500"/>
        <circle cx="119" cy="115" r="2.500"/><circle cx="264" cy="183" r="2.500"/><circle cx="173" cy="263" r="2.500"/>
        <use href="#ah" transform="translate(211 35) rotate(25) scale(1.5)"/>
        <use href="#ah" transform="translate(211 35) rotate(135) scale(1.5)"/>
        <use href="#ah" transform="translate(161 76) rotate(-40) scale(1.5)"/>
        <use href="#ah" transform="translate(261 58) rotate(203) scale(1.5)"/>
      </g>
      <text x="-9" y="6" transform="translate(183 45) rotate(-42)">10</text>
      <text x="-4" y="6" transform="translate(240 39) rotate(-62)">8</text>
      <g stroke="#f00" fill="#f00"><path d="M357 104L375 89M357 104l10 4"/><path d="M378 86l-3 6-3-4zM372 110l-6-4-1 4z"/><circle cx="357" cy="104" r="2.500" fill="#c22"/></g>
      <g stroke="#0000e0" fill="#0000e0"><path d="M376 249l-2-20M376 249l10 4M371 245l9 9M380 245l-9 9"/><path d="M374 225l3 7h-6zM389 256l-6-5-2 5z"/></g>
    </svg>

    <svg class="triad" viewBox="0 0 60 66">
      <path d="M27 38L24 20" stroke="#116511" stroke-width="4"/><path d="M24 12l4 12h-8z" fill="#1d7c1d"/>
      <path d="M27 38l14 7" stroke="#a01818" stroke-width="4"/><path d="M51 49l-13 0 4-8z" fill="#d22"/>
      <path d="M27 38L14 48" stroke="#15158c" stroke-width="4"/><path d="M6 55l6-11 6 7z" fill="#2424c8"/>
      <text x="20" y="12" fill="#177017">Y</text><text x="49" y="54" fill="#c22">X</text><text x="1" y="62" fill="#1a1aa0">Z</text>
    </svg>
  </div>
</main>

<div class="bottom-tabs">
  <span class="mark"></span>
  <div class="scroll"><button aria-label="В начало">|◀</button><button aria-label="Назад">◀</button><button aria-label="Вперёд">▶</button><button aria-label="В конец">▶|</button></div>
  <a href="#" class="active">Модель</a>
  <a href="#">Трехмерные виды</a>
  <a href="#">Анимация1</a>
</div>

<div class="filters">
  <button aria-label="Фильтр"><svg><use href="#filter"/></svg></button>
  <button aria-label="Очистить фильтры"><svg><use href="#filters"/></svg></button>
  <button aria-label="Все фильтры"><svg><use href="#filters-on"/></svg></button>
  <button aria-label="Выбор"><svg><use href="#cursor"/></svg></button>
  <button class="narrow" aria-label="Ещё"><span class="arrow"></span></button>
  <button class="sep" aria-label="Выбрать другой"><svg><use href="#sel-stack"/></svg></button>
  <button aria-label="Вершины"><svg><use href="#f-vertex"/><use href="#fn"/></svg></button>
  <button aria-label="Кромки"><svg><use href="#f-edge"/><use href="#fn"/></svg></button>
  <button aria-label="Грани"><svg><use href="#f-face"/><use href="#fn"/></svg></button>
  <button aria-label="Поверхности"><svg><use href="#f-surf"/><use href="#fn"/></svg></button>
  <button aria-label="Твердые тела"><svg><use href="#f-solid"/><use href="#fn"/></svg></button>
  <button aria-label="Оси"><svg><use href="#f-axis"/><use href="#fn"/></svg></button>
  <button aria-label="Плоскости"><svg><use href="#f-plane"/><use href="#fn"/></svg></button>
  <button aria-label="Точки"><svg><use href="#f-point"/><use href="#fn"/></svg></button>
  <button aria-label="Эскизы"><svg><use href="#f-sketch"/><use href="#fn"/></svg></button>
  <button aria-label="Сегменты"><svg><use href="#f-seg"/><use href="#fn"/></svg></button>
  <button aria-label="Средние точки"><svg><use href="#f-mid"/><use href="#fn"/></svg></button>
  <button aria-label="Центры"><svg><use href="#f-center"/><use href="#fn"/></svg></button>
  <button aria-label="Осевые линии"><svg><use href="#f-cline"/><use href="#fn"/></svg></button>
  <button aria-label="Размеры"><svg><use href="#f-dim"/><use href="#fn"/></svg></button>
  <button aria-label="Шероховатость"><svg><use href="#f-rough"/><use href="#fn"/></svg></button>
  <button aria-label="Допуски"><svg><use href="#f-gtol"/><use href="#fn"/></svg></button>
  <button aria-label="Заметки"><svg><use href="#f-note"/><use href="#fn"/></svg></button>
  <button aria-label="Базы"><svg><use href="#f-datum"/><use href="#fn"/></svg></button>
  <button aria-label="Сварные швы"><svg><use href="#f-weld"/><use href="#fn"/></svg></button>
  <button aria-label="Каталоги"><svg><use href="#f-cat"/><use href="#fn"/></svg></button>
  <button aria-label="Местные виды"><svg><use href="#f-detail"/><use href="#fn"/></svg></button>
  <button aria-label="Резьба"><svg><use href="#f-thread"/><use href="#fn"/></svg></button>
  <button class="boxed" aria-label="Блоки"><svg><use href="#f-block"/><use href="#fn"/></svg></button>
  <button aria-label="Центр масс"><svg><use href="#f-mass"/><use href="#fn"/></svg></button>
  <button aria-label="Соединения"><svg><use href="#f-conn"/><use href="#fn"/></svg></button>
  <button aria-label="Маршруты"><svg><use href="#f-route"/><use href="#fn"/></svg></button>
  <button aria-label="Грани сетки"><svg><use href="#f-mface"/><use href="#fn"/></svg></button>
  <button aria-label="Кромки сетки"><svg><use href="#f-medge"/><use href="#fn"/></svg></button>
  <button class="sep" aria-label="Вершины сетки"><svg><use href="#f-mpoint"/><use href="#fn"/></svg></button>
</div>

<footer class="status">
  <span class="hint">ыберите маркер, чтобы изменить настройки</span>
  <span class="cell">Определен</span>
  <span class="cell editing">Редактируется Эскиз7</span>
  <span class="cell custom">Настройка <span class="arrow up"></span></span>
</footer>

<div class="taskbar">
  <button aria-label="Пуск"><svg><use href="#win"/></svg></button>
  <button aria-label="Поиск"><svg><use href="#search"/></svg></button>
  <button aria-label="Представление задач"><svg><use href="#tasks"/></svg></button>
  <button aria-label="Калькулятор"><svg><use href="#calc"/></svg></button>
  <button aria-label="Y"><svg><use href="#y-blue"/></svg></button>
  <button><span class="ra">Ra</span></button>
  <button aria-label="Блоки"><svg><use href="#blocks"/></svg></button>
  <button aria-label="AutoCAD"><svg><use href="#acad"/></svg></button>
  <button class="open" aria-label="Проводник"><svg><use href="#explorer"/></svg></button>
  <button class="open" aria-label="1C"><svg><use href="#onec"/></svg></button>
  <button aria-label="Настройки"><svg><use href="#cog"/></svg></button>
  <button aria-label="X"><svg><use href="#xlogo"/></svg></button>
  <button><svg><use href="#swcube"/></svg><span class="sw">S W<small>2018</small></span></button>
  <button class="open" aria-label="The Bat"><svg><use href="#bat"/></svg></button>
  <button class="open" aria-label="X"><svg><use href="#xlogo"/></svg></button>
  <button class="open current"><svg><use href="#swcube"/></svg><span class="sw">S W<small>2018</small></span></button>
  <button class="open" aria-label="Яндекс"><svg><use href="#y-red"/></svg></button>
  <button class="open" aria-label="Paint"><svg><use href="#paint"/></svg></button>
  <div class="tray">
    <svg viewBox="0 0 16 16"><path d="M3 11l5-5 5 5" fill="none" stroke="#fff" stroke-width="1.500"/></svg>
    <svg viewBox="0 0 16 16"><path d="M5 3h10v8H5M1 2h4v4H1zM3 6v8h9M9 11v3" fill="none" stroke="#fff"/></svg>
    <svg viewBox="0 0 16 16"><path d="M1 6h2l3-3v10l-3-3H1zM8 6q2 2 0 4M10 4q4 4 0 8M12 3q5 5 0 10" fill="none" stroke="#fff"/></svg>
    <span>РУС</span>
    <time>16:01<br>24.08.2026</time>
    <svg class="notes" viewBox="0 0 20 20"><path d="M1 3h17v12H9l-4 4v-4H1z" fill="#fff"/><path d="M4 6h12M4 9h10M4 12h7" stroke="#0a0f18"/><circle cx="15" cy="15" r="6" fill="#444" stroke="#aaa"/></svg>
  </div>
</div>

</body>
</html>
```

FILE: styles.css
```css
* {
  box-sizing: border-box;
}

html, body {
  height: 100%;
}

body {
  margin: 0;
  display: flex;
  flex-direction: column;
  overflow: hidden;
  background-color: #f7f7f7;
  color: #111;
  font-family: "Noto Sans", "Open Sans", sans-serif;
  font-size: 11px;
  line-height: 13px;
}

button {
  padding: 0;
  border: none;
  background: none;
  color: inherit;
  font: inherit;
}

a {
  color: inherit;
  text-decoration: none;
}

svg {
  flex: none;
  width: 20px;
  height: 20px;
}

.sprite {
  position: absolute;
  width: 0;
  height: 0;
}

.arrow {
  display: inline-block;
  border: 3px solid transparent;
  border-top: 4px solid #777;
  border-bottom: none;
}

.arrow.up {
  border-top: none;
  border-bottom: 4px solid #888;
}

.min {
  display: inline-block;
  width: 10px;
  height: 3px;
  margin-top: 10px;
  background-color: currentColor;
}

/* Title bar */
.titlebar {
  display: flex;
  align-items: center;
  height: 22px;
  padding-bottom: 8px;
  border-bottom: 1px solid #777;
  white-space: nowrap;
}

.logo {
  display: flex;
  align-items: center;
  align-self: flex-start;
  gap: 4px;
  width: 145px;
  height: 26px;
  margin-left: 1px;
  padding: 0 0 4px 5px;
  border: 1px solid #888;
  border-top: none;
  background: linear-gradient(#fff, #dcdcdc);
  color: #c9201d;
  z-index: 1;
}

.logo .ds {
  width: 28px;
}

.logo b {
  font-size: 16px;
}

.logo i {
  font-family: "Open Sans", sans-serif;
  font-size: 16px;
  font-weight: 300;
}

.menu {
  display: flex;
  gap: 16px;
  padding-left: 26px;
}

.pin {
  width: 14px;
  height: 14px;
  margin: 0 8px 0 25px;
}

.quick {
  display: flex;
  gap: 1px;
  margin-top: 1px;
  padding-left: 13px;
  border-left: 2px solid #999;
}

.quick button {
  display: flex;
  align-items: center;
  width: 38px;
}

.quick button:not(.no-arrow)::after {
  content: "";
  margin-left: 6px;
  border: 3px solid transparent;
  border-top: 4px solid #777;
  border-bottom: none;
}

.quick .no-arrow {
  width: 25px;
}

.quick .on::after {
  border-top-color: #222;
}

.doc-title {
  margin-left: auto;
}

.search {
  display: flex;
  align-items: center;
  gap: 6px;
  width: 246px;
  height: 20px;
  margin: 0 12px 0 69px;
  padding: 0 5px;
  border: 1px solid #222;
  background-color: #eceef1;
}

.search svg {
  width: 16px;
  height: 16px;
}

.search input {
  flex: 1;
  min-width: 0;
  padding: 0;
  border: none;
  background: none;
  font: inherit;
}

.search input::placeholder {
  color: #777;
}

.window-buttons {
  display: flex;
  align-items: center;
  gap: 10px;
  padding-right: 10px;
  color: #333;
}

.window-buttons button {
  display: flex;
  align-items: center;
}

.window-buttons .question {
  gap: 11px;
  padding-right: 6px;
  font-size: 15px;
  font-weight: bold;
  line-height: 14px;
}

.window-buttons svg {
  width: 16px;
  height: 16px;
}

/* Ribbon */
.ribbon {
  display: grid;
  grid-template-columns: 34px 127px 149px 58px 64px 102px 66px 78px 226px 118px 69px 64px 57px 60px 60px 65px 84px 61px 58px;
  grid-template-rows: 78px;
  height: 87px;
  padding-top: 6px;
  border-bottom: 1px solid #888;
  color: #aaa;
  white-space: nowrap;
}

.tool {
  display: grid;
  align-content: start;
  justify-items: center;
  padding-top: 5px;
}

.tool.low {
  padding-top: 12px;
}

.tool svg {
  width: 19px;
  height: 19px;
  margin-bottom: 2px;
}

.tool .arrow {
  margin-top: 12px;
}

.tool.on {
  color: #111;
}

.tool.on .arrow {
  border-top-color: #222;
}

.tool.pressed {
  padding-top: 11px;
  border: 1px solid #666;
  background-color: #b1b1b1;
}

.sep {
  border-right: 1px solid #bbb;
}

.sketch-grid {
  display: grid;
  grid-template-columns: repeat(4, 40px);
  grid-auto-rows: 26px;
  padding-left: 5px;
  overflow: hidden;
}

.sketch-grid button {
  display: flex;
  align-items: center;
  gap: 6px;
}

.sketch-grid svg {
  width: 19px;
  height: 19px;
}

.tool-list {
  display: grid;
  grid-auto-rows: 26px;
  padding: 0 6px 0 3px;
}

.tool-list button {
  display: flex;
  align-items: center;
  gap: 7px;
}

.tool-list .arrow {
  margin-left: auto;
}

.tool-list svg {
  width: 18px;
  height: 18px;
}

/* Tabs */
.tabs {
  display: flex;
  height: 22px;
  background: linear-gradient(to right, #fff 62%, #dfe3ed 80%, #e3e7ef 93%, #ebedf1);
  white-space: nowrap;
}

.tabs a {
  padding: 4px 9px;
  border: solid #858585;
  border-width: 0 1px 1px 0;
  background-color: #d4d4d4;
}

.tabs a:first-child {
  padding: 4px 8px 4px 0;
}

.tabs .active {
  padding: 4px 11px;
  border-bottom-color: #f7f7f7;
  background-color: #f7f7f7;
  font-weight: bold;
}

.doc-buttons {
  display: flex;
  align-items: center;
  gap: 12px;
  margin-left: auto;
  padding: 8px 13px 0 0;
  color: #888;
}

.doc-buttons button {
  display: flex;
}

.doc-buttons svg {
  width: 15px;
  height: 14px;
}

/* Main area */
main {
  display: flex;
  flex: 1;
  min-height: 0;
}

.side-bars {
  display: flex;
  align-items: flex-start;
  width: 57px;
}

.bar {
  display: flex;
  flex-direction: column;
  align-items: center;
  gap: 6px;
  padding: 17px 0 10px;
  border-bottom: 1px solid #999;
  background: repeating-linear-gradient(to right, #999 0 1px, transparent 1px 3px) 0 4px / 100% 2px no-repeat;
}

.bar-first {
  width: 25px;
  padding-right: 9px;
}

.bar-second {
  width: 31px;
  border-left: 1px solid #999;
}

.bar hr {
  width: 25px;
  margin: 0;
  border: none;
  border-top: 1px solid #999;
}

.panel {
  width: 250px;
  padding: 3px 6px 0 0;
  border-right: 1px solid #888;
}

.grip {
  display: grid;
  place-items: center;
  height: 15px;
  border: solid #bbb;
  border-width: 1px 0;
}

.grip span,
.handle span {
  width: 6px;
  height: 6px;
  border: 1px solid #999;
  border-radius: 50%;
  background-color: #ccc;
}

.panel-tabs {
  display: flex;
  margin-top: 4px;
  border-bottom: 1px solid #999;
}

.panel-tabs button {
  display: grid;
  place-items: center;
  width: 40px;
  height: 26px;
  border: solid #888;
  border-width: 1px 1px 0 0;
  background-color: #d2d2d2;
}

.panel-tabs .active {
  margin-bottom: -1px;
  border-top-color: #bbb;
  background-color: #f7f7f7;
}

.panel-title {
  display: flex;
  align-items: center;
  gap: 7px;
  height: 32px;
  padding: 0 5px 0 9px;
}

.panel-title svg {
  width: 16px;
  height: 18px;
}

.panel-title h1 {
  margin: 0 auto 0 0;
  font-size: 12px;
}

.panel-title button {
  display: flex;
}

.panel-actions {
  display: flex;
  align-items: flex-start;
  gap: 11px;
  height: 32px;
  padding: 1px 5px 0;
}

.panel-actions button {
  display: flex;
}

.panel-actions svg {
  width: 16px;
  height: 18px;
}

.group {
  margin-left: 3px;
  padding: 7px 7px 0 4px;
  border-top: 1px solid #aaa;
}

.group h2 {
  display: flex;
  align-items: center;
  justify-content: space-between;
  height: 14px;
  margin: 0 -5px 7px 0;
  color: #444;
  font-size: 11px;
}

.group h2 svg {
  width: 11px;
  height: 8px;
}

.group h2 .check {
  height: 14px;
  gap: 8px;
  padding: 0;
}

.group:nth-last-child(-n+2) {
  height: 32px;
}

.from {
  padding-bottom: 9px;
}

.from .select {
  margin-left: 30px;
}

.field {
  display: flex;
  gap: 6px;
  margin-bottom: 3px;
}

.field .select,
.listbox {
  flex: 1;
}

.select {
  position: relative;
}

.select select {
  display: block;
  width: 100%;
  height: 21px;
  padding: 0 4px;
  border: 1px solid #999;
  border-radius: 0;
  background-color: #e1e1e1;
  appearance: none;
  font: inherit;
}

/* the chevron lies over the select */
.select::after {
  content: "";
  position: absolute;
  top: 5px;
  right: 6px;
  width: 6px;
  height: 6px;
  border: solid #666;
  border-width: 0 1px 1px 0;
  transform: rotate(45deg);
  pointer-events: none;
}

.reverse {
  width: 24px;
  height: 23px;
  border: 1px solid #999;
  background-color: #fff;
}

.dir {
  width: 24px;
  height: 14px;
  margin-top: 5px;
}

.listbox {
  height: 36px;
  border-left: 13px solid #59a8f8;
}

.listbox input {
  display: block;
  width: calc(100% - 1px);
  height: 36px;
  margin-left: 1px;
  border: 1px solid #888;
  background-color: #fff;
}

.check {
  display: flex;
  align-items: center;
  gap: 3px;
  height: 24px;
  padding-left: 30px;
  white-space: nowrap;
}

.check.inner {
  padding-left: 42px;
}

.check input {
  display: grid;
  place-items: center;
  width: 13px;
  height: 13px;
  margin: 0;
  border: 1px solid #333;
  background-color: #fff;
  appearance: none;
}

.check input:checked::before {
  content: "";
  width: 8px;
  height: 4px;
  border: solid #333;
  border-width: 0 0 1px 1px;
  transform: rotate(-45deg);
}

.direction {
  padding-bottom: 5px;
}

/* Graphics area */
.viewport {
  position: relative;
  flex: 1;
  overflow: hidden;
  background:
    linear-gradient(to bottom, transparent 50%, rgba(255, 255, 255, .5) 60%, #fdfdfe 70%, #fff 86%, #fafbfe),
    radial-gradient(ellipse 55% 62% at 22% 0%, #fff 55%, rgba(255, 255, 255, .6) 78%, transparent),
    radial-gradient(ellipse 24% 55% at 102% 0%, #eeeff2 20%, transparent),
    linear-gradient(#dde1ec, #dfe3ee);
}

.handle {
  position: absolute;
  top: 387px;
  left: 0;
  display: grid;
  place-items: center;
  width: 8px;
  height: 38px;
  border: 1px solid #888;
  border-left: none;
  background-color: #f7f7f7;
}

.tree-node {
  position: absolute;
  top: 6px;
  left: 5px;
  display: flex;
  align-items: center;
  gap: 4px;
  color: #000;
}

.tree-node svg {
  width: 18px;
  height: 18px;
}

.expand-arrow {
  margin-right: 9px;
  border: 4px solid transparent;
  border-left: 5px solid #111;
  border-right: none;
}

.view-tools {
  position: absolute;
  top: 5px;
  left: 625px;
  display: flex;
  gap: 8px;
}

.view-tools button {
  display: flex;
  align-items: center;
  gap: 6px;
}

.view-tools svg {
  width: 18px;
  height: 20px;
}

.view-tools .arrow {
  border-top-color: #999;
  margin-right: 2px;
}

.confirm {
  position: absolute;
  top: 35px;
  right: 8px;
  width: 70px;
  height: 56px;
}

.model {
  position: absolute;
  top: 159px;
  left: 433px;
  width: 560px;
  height: 640px;
}

.model text {
  font-family: "Liberation Sans", Arial, sans-serif;
  font-size: 17px;
  font-weight: bold;
}

.triad {
  position: absolute;
  left: 13px;
  bottom: 30px;
  width: 60px;
  height: 66px;
}

.triad text {
  font-family: "Liberation Serif", serif;
  font-size: 12px;
}

/* Bottom */
.bottom-tabs {
  display: flex;
  height: 16px;
  border-top: 1px solid #888;
  line-height: 12px;
}

.bottom-tabs .mark {
  width: 1px;
  margin: 0 25px 0 58px;
  background-color: #7aa0b0;
}

.scroll {
  display: flex;
  background-color: #aaa;
}

.scroll button {
  width: 16px;
  border: 1px solid #909090;
  color: #888;
  font-size: 8px;
}

.bottom-tabs a {
  padding: 0 17px 0 13px;
  border-right: 1px solid #888;
  background-color: #d4d4d4;
}

.bottom-tabs .active {
  padding: 0 9px 0 14px;
  background-color: #f7f7f7;
  font-weight: bold;
}

.filters {
  display: flex;
  align-items: center;
  height: 33px;
  padding-left: 4px;
  border-bottom: 1px solid #888;
}

.filters button {
  display: grid;
  place-items: center;
  width: 27px;
  height: 30px;
}

.filters svg {
  width: 24px;
  height: 19px;
}

.filters .narrow {
  width: 15px;
}

.filters .sep {
  width: 31px;
  padding-right: 4px;
}

.filters .sep + button {
  margin-left: 6px;
}

.filters .boxed {
  height: 26px;
  border: 1px solid #aaa;
  background-color: #fff;
}

.status {
  display: flex;
  align-items: center;
  height: 18px;
  padding-top: 1px;
}

.hint {
  margin-right: auto;
}

.cell {
  padding: 1px 6px 1px 4px;
  border-right: 1px solid #ccc;
}

.editing {
  margin-left: 7px;
  border-left: 1px solid #ccc;
}

.custom {
  margin-left: 16px;
  padding: 1px 60px 1px 31px;
  border: none;
  border-left: 1px solid #ccc;
  color: #999;
}

.custom .arrow {
  margin: 0 0 3px 16px;
}

.taskbar {
  display: flex;
  height: 40px;
  background-color: #050b14;
  color: #fff;
}

.taskbar button {
  display: grid;
  place-items: center;
  width: 49px;
  border: solid transparent;
  border-width: 0 4px;
}

.taskbar button:first-child {
  width: 39px;
  border-width: 0 11px 0 0;
}

.taskbar svg {
  width: 24px;
  height: 24px;
}

.taskbar .open {
  background: linear-gradient(#76b9ed, #76b9ed) bottom / 100% 2px no-repeat;
  background-clip: padding-box;
}

.taskbar .current {
  border-width: 0;
  background-color: #3d4248;
}

.taskbar button > * {
  grid-area: 1 / 1;
}

.ra {
  width: 24px;
  height: 24px;
  background-color: #7cb928;
  font-size: 16px;
  font-weight: bold;
  line-height: 24px;
}

.sw {
  display: grid;
  padding-top: 4px;
  font-family: "Liberation Sans", Arial, sans-serif;
  font-size: 10px;
  font-weight: bold;
  line-height: 10px;
}

.sw small {
  font-size: 8px;
}

.tray {
  display: flex;
  align-items: center;
  gap: 10px;
  margin: 0 -4px 0 auto;
  font-size: 12px;
}

.tray svg {
  width: 16px;
  height: 16px;
}

.tray time {
  margin: 0 7px 0 3px;
  font-size: 11px;
  line-height: 18px;
  text-align: center;
}

.tray .notes {
  width: 20px;
  height: 20px;
}
```
